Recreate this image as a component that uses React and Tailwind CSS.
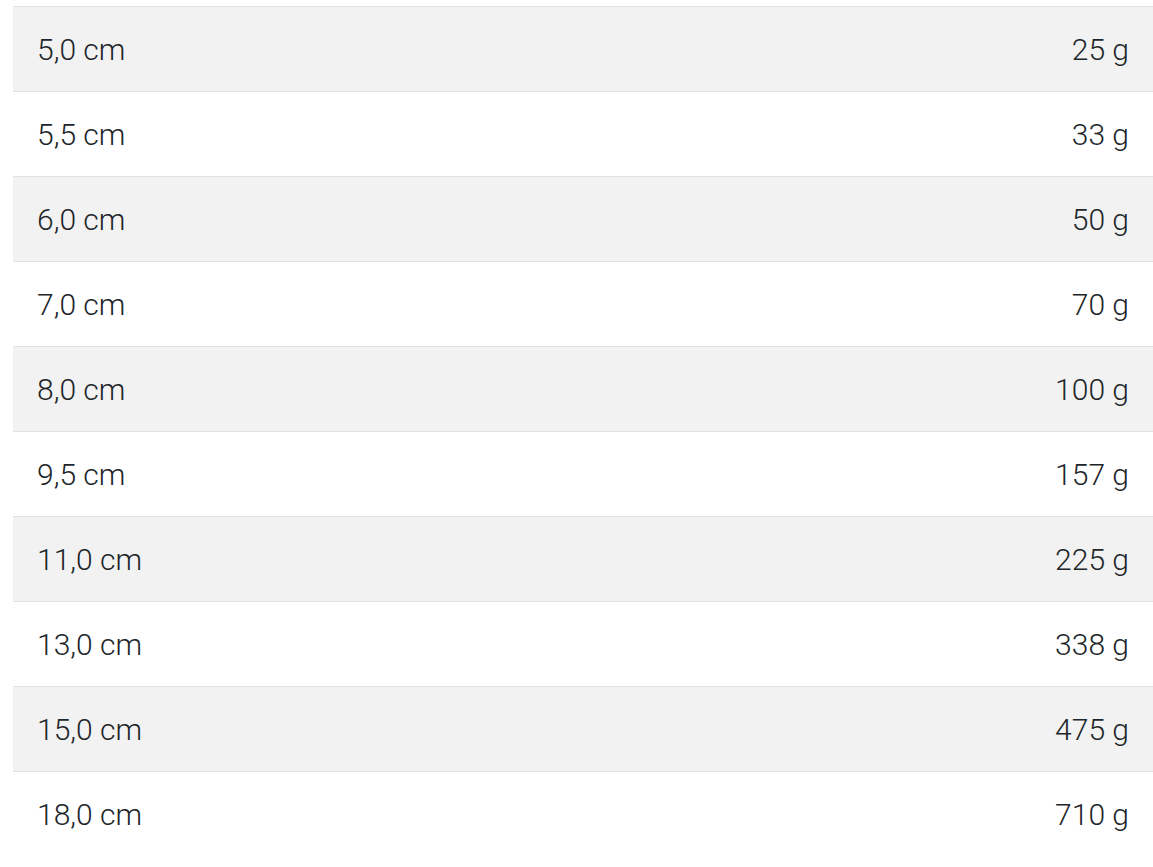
import React from "react";

// Size / weight table
const rows = [
  ["5,0 cm", "25 g"],
  ["5,5 cm", "33 g"],
  ["6,0 cm", "50 g"],
  ["7,0 cm", "70 g"],
  ["8,0 cm", "100 g"],
  ["9,5 cm", "157 g"],
  ["11,0 cm", "225 g"],
  ["13,0 cm", "338 g"],
  ["15,0 cm", "475 g"],
  ["18,0 cm", "710 g"],
];

export default function App() {
  return (
    <div className="min-h-screen bg-white pt-[6px] pl-[13px] font-['Roboto',sans-serif] font-light text-[30px] text-[#212529]">
      <div className="w-[1140px]">
        {rows.map(([size, weight], i) => (
          <div
            key={size}
            className={`flex items-center justify-between h-[85px] px-6 border-t border-[#dee2e6] ${i % 2 === 0 ? "bg-[#f2f2f2]" : "bg-white"}`}
          >
            <span>{size}</span>
            <span>{weight}</span>
          </div>
        ))}
      </div>
    </div>
  );
}
